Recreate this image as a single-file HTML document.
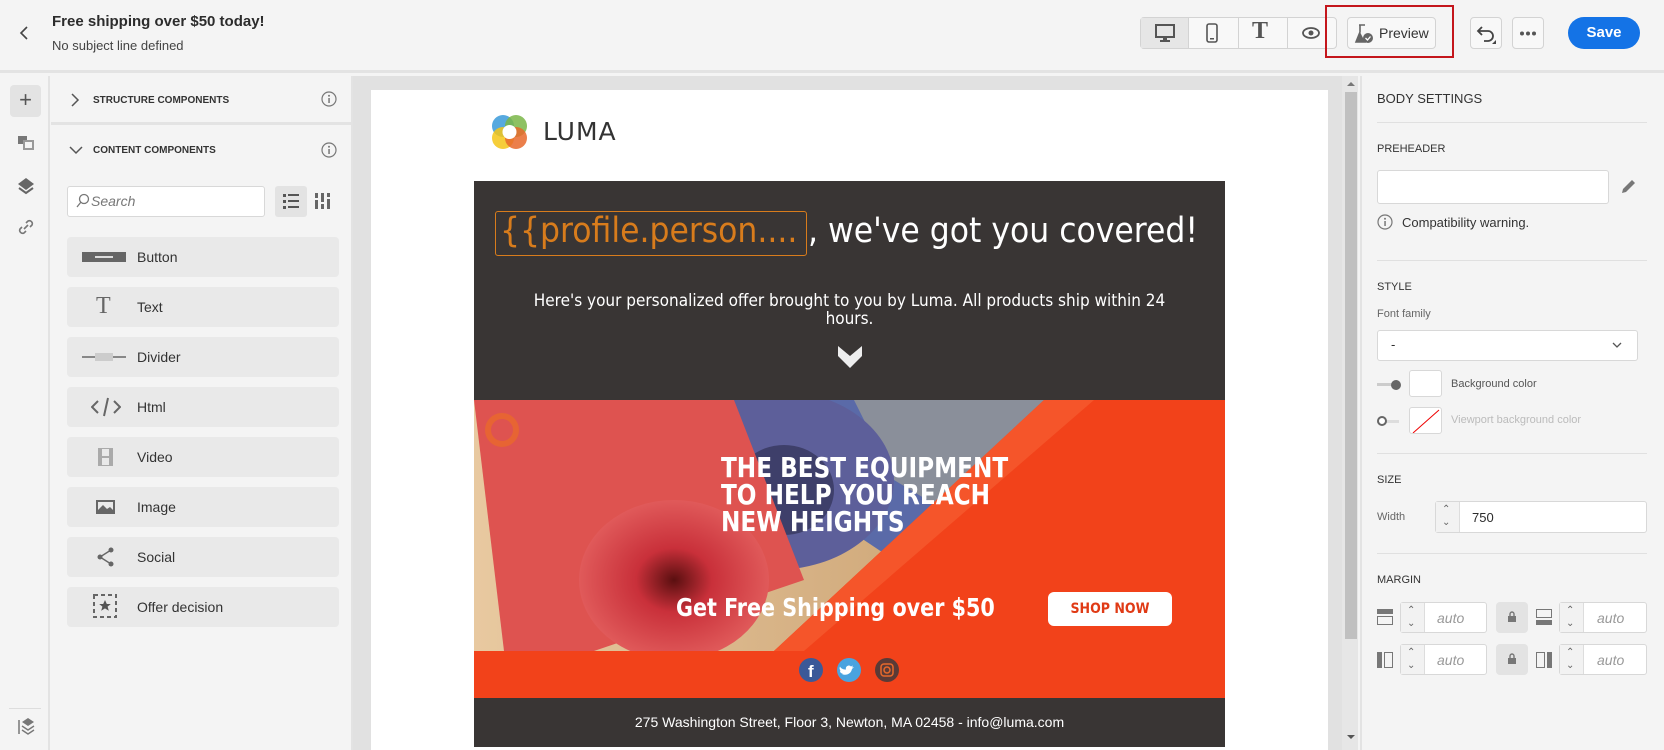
<!DOCTYPE html>
<html><head><meta charset="utf-8"><style>
*{box-sizing:border-box;margin:0;padding:0}
body{width:1664px;height:750px;overflow:hidden;background:#f4f4f4;font-family:"Liberation Sans",sans-serif;color:#2c2c2c;position:relative}
.a{position:absolute}
.hdr{left:0;top:0;width:1664px;height:73px;background:#f4f4f4;border-bottom:3px solid #e3e3e3}
.btn{position:absolute;border:1px solid #d3d3d3;border-radius:4px;background:#f8f8f8}
.item{position:absolute;left:67px;width:272px;height:40px;background:#e9e9e9;border-radius:4px;font-size:14px;color:#333}
.item span{position:absolute;left:70px;top:12px}
.item svg{position:absolute;left:18px;top:8px}
.lbl{position:absolute;font-size:12px;color:#333;text-transform:uppercase}
.inp{position:absolute;background:#fff;border:1px solid #d8d8d8;border-radius:3px}
.hr{position:absolute;left:1377px;width:270px;height:1px;background:#e0e0e0}
.it{font-style:italic;color:#999;font-size:14px;position:absolute}
</style></head><body>
<div class="a hdr"></div>
<svg class="a" style="left:18px;top:25px" width="12" height="16"><path d="M9 2L3 8l6 6" stroke="#444" stroke-width="1.6" fill="none"/></svg>
<div class="a" style="left:52px;top:13px;font-size:15px;font-weight:bold">Free shipping over $50 today!</div>
<div class="a" style="left:52px;top:38px;font-size:13px;color:#444">No subject line defined</div>
<div class="btn" style="left:1140px;top:17px;width:197px;height:32px;background:#f8f8f8"></div>
<div class="a" style="left:1141px;top:18px;width:48px;height:30px;background:#e6e6e6;border-right:1px solid #d3d3d3"></div>
<div class="a" style="left:1238px;top:18px;width:1px;height:30px;background:#d3d3d3"></div>
<div class="a" style="left:1287px;top:18px;width:1px;height:30px;background:#d3d3d3"></div>
<svg class="a" style="left:1155px;top:24px" width="20" height="18"><rect x="1" y="1" width="18" height="12" fill="none" stroke="#555" stroke-width="2"/><rect x="8" y="13" width="4" height="3" fill="#555"/><rect x="5" y="16" width="10" height="2" fill="#555"/></svg>
<svg class="a" style="left:1206px;top:23px" width="12" height="20"><rect x="1" y="1" width="10" height="18" rx="2" fill="none" stroke="#555" stroke-width="1.6"/><rect x="4" y="15" width="4" height="1.5" fill="#555"/></svg>
<div class="a" style="left:1252px;top:18px;font-size:24px;color:#555;font-family:'Liberation Serif',serif;font-weight:bold">T</div>
<svg class="a" style="left:1302px;top:27px" width="18" height="12"><ellipse cx="9" cy="6" rx="8" ry="5" fill="none" stroke="#555" stroke-width="1.8"/><circle cx="9" cy="6" r="2.5" fill="#555"/></svg>
<div class="btn" style="left:1347px;top:17px;width:89px;height:32px"></div>
<svg class="a" style="left:1354px;top:23px" width="20" height="22"><path d="M5 2h6M6 2v7L2 19h10" stroke="#666" stroke-width="1.6" fill="none"/><path d="M6 9L2 19h9z" fill="#666"/><circle cx="14" cy="15" r="5" fill="#666"/><path d="M11.5 15l2 2 3-3.5" stroke="#fff" stroke-width="1.3" fill="none"/></svg>
<div class="a" style="left:1379px;top:25px;font-size:14px;color:#333">Preview</div>
<div class="a" style="left:1325px;top:5px;width:129px;height:53px;border:2px solid #c4161c"></div>
<div class="btn" style="left:1470px;top:17px;width:32px;height:32px"></div>
<svg class="a" style="left:1476px;top:24px" width="22" height="20"><path d="M6 3L2 7l4 4M2 7h10a5 5 0 010 10H8" stroke="#444" stroke-width="1.8" fill="none"/><path d="M20 16v4h-4z" fill="#444"/></svg>
<div class="btn" style="left:1512px;top:17px;width:32px;height:32px"></div>
<svg class="a" style="left:1518px;top:31px" width="20" height="5"><circle cx="4" cy="2.5" r="2" fill="#555"/><circle cx="10" cy="2.5" r="2" fill="#555"/><circle cx="16" cy="2.5" r="2" fill="#555"/></svg>
<div class="a" style="left:1568px;top:17px;width:72px;height:32px;background:#1473e6;border-radius:16px;color:#fff;font-weight:bold;font-size:15px;text-align:center;line-height:32px">Save</div>

<div class="a" style="left:0;top:76px;width:50px;height:674px;background:#f4f4f4;border-right:2px solid #e3e3e3"></div>
<div class="a" style="left:10px;top:85px;width:31px;height:32px;background:#e3e3e3;border-radius:4px;font-size:22px;color:#555;text-align:center;line-height:30px">+</div>
<svg class="a" style="left:17px;top:135px" width="18" height="16"><rect x="1" y="1" width="9" height="8" fill="#777"/><rect x="6" y="5" width="11" height="10" fill="#999"/><rect x="8" y="7" width="7" height="6" fill="#f4f4f4"/></svg>
<svg class="a" style="left:17px;top:177px" width="18" height="18"><path d="M9 1l8 6-8 6-8-6z" fill="#666"/><path d="M2 11l7 5 7-5" stroke="#666" stroke-width="2" fill="none"/></svg>
<svg class="a" style="left:17px;top:218px" width="18" height="18"><path d="M7 11l4-4M5 9l-2 2a3 3 0 004 4l2-2M13 9l2-2a3 3 0 00-4-4L9 5" stroke="#777" stroke-width="1.6" fill="none"/></svg>
<div class="a" style="left:9px;top:708px;width:32px;height:1px;background:#ddd"></div>
<svg class="a" style="left:17px;top:717px" width="18" height="18"><path d="M2 3v14" stroke="#777" stroke-width="1.5"/><path d="M11 1l6 4-6 4-6-4z" fill="#777"/><path d="M5 9l6 4 6-4M5 13l6 4 6-4" stroke="#777" stroke-width="1.4" fill="none"/></svg>

<div class="a" style="left:51px;top:76px;width:302px;height:674px;background:#f4f4f4;border-right:2px solid #e3e3e3"></div>
<div class="a" style="left:51px;top:122px;width:302px;height:3px;background:#e3e3e3"></div>
<svg class="a" style="left:70px;top:93px" width="10" height="14"><path d="M2 1l6 6-6 6" stroke="#555" stroke-width="1.5" fill="none"/></svg>
<div class="lbl" style="left:93px;top:95px;font-size:10px;font-weight:bold;color:#333">Structure components</div>
<svg class="a" style="left:321px;top:91px" width="16" height="16"><circle cx="8" cy="8" r="7" fill="none" stroke="#777" stroke-width="1.2"/><rect x="7.3" y="7" width="1.5" height="5" fill="#777"/><circle cx="8" cy="4.7" r="1" fill="#777"/></svg>
<svg class="a" style="left:69px;top:145px" width="14" height="10"><path d="M1 2l6 6 6-6" stroke="#555" stroke-width="1.5" fill="none"/></svg>
<div class="lbl" style="left:93px;top:145px;font-size:10px;font-weight:bold;color:#333">Content components</div>
<svg class="a" style="left:321px;top:142px" width="16" height="16"><circle cx="8" cy="8" r="7" fill="none" stroke="#777" stroke-width="1.2"/><rect x="7.3" y="7" width="1.5" height="5" fill="#777"/><circle cx="8" cy="4.7" r="1" fill="#777"/></svg>
<div class="inp" style="left:67px;top:186px;width:198px;height:31px"></div>
<svg class="a" style="left:76px;top:193px" width="14" height="16"><circle cx="8" cy="6" r="4.5" fill="none" stroke="#777" stroke-width="1.3"/><path d="M5 9l-4 5" stroke="#777" stroke-width="1.3"/></svg>
<div class="a" style="left:91px;top:193px;font-size:14px;font-style:italic;color:#777">Search</div>
<div class="a" style="left:275px;top:186px;width:32px;height:31px;background:#e3e3e3;border-radius:3px"></div>
<svg class="a" style="left:283px;top:193px" width="16" height="16"><g fill="#555"><rect x="0" y="1" width="3" height="3"/><rect x="5" y="1" width="11" height="2"/><rect x="0" y="7" width="3" height="3"/><rect x="5" y="7" width="11" height="2"/><rect x="0" y="13" width="3" height="3"/><rect x="5" y="13" width="11" height="2"/></g></svg>
<svg class="a" style="left:315px;top:193px" width="16" height="16"><g fill="#666"><rect x="0" y="0" width="3" height="5"/><rect x="6" y="0" width="3" height="9"/><rect x="12" y="0" width="3" height="4"/><rect x="0" y="7" width="3" height="9"/><rect x="6" y="11" width="3" height="5"/><rect x="12" y="6" width="3" height="10"/></g></svg>

<div class="item" style="top:237px"><svg width="44" height="24" style="left:15px"><rect x="0" y="7" width="44" height="10" fill="#666"/><rect x="13" y="11" width="18" height="2" fill="#ddd"/></svg><span>Button</span></div>
<div class="item" style="top:287px"><div class="a" style="left:29px;top:6px;font-family:'Liberation Serif',serif;font-size:24px;color:#666">T</div><span>Text</span></div>
<div class="item" style="top:337px"><svg width="44" height="24" style="left:15px"><rect x="0" y="11" width="44" height="2" fill="#888"/><rect x="13" y="8" width="18" height="8" fill="#ccc"/></svg><span>Divider</span></div>
<div class="item" style="top:387px"><svg width="30" height="24" style="left:24px"><path d="M7 6L1 12l6 6M23 6l6 6-6 6M17 3l-4 18" stroke="#666" stroke-width="2" fill="none"/></svg><span>Html</span></div>
<div class="item" style="top:437px"><svg width="20" height="24" style="left:29px"><rect x="2" y="3" width="15" height="18" fill="#aaa"/><rect x="6" y="4" width="7" height="7" fill="#e9e9e9"/><rect x="6" y="13" width="7" height="7" fill="#e9e9e9"/></svg><span>Video</span></div>
<div class="item" style="top:487px"><svg width="22" height="24" style="left:28px"><rect x="1" y="5" width="19" height="14" fill="#666"/><rect x="3" y="7" width="15" height="8" fill="#e9e9e9"/><path d="M3 15l5-5 4 4 3-2 3 3v1H3z" fill="#666"/></svg><span>Image</span></div>
<div class="item" style="top:537px"><svg width="20" height="24" style="left:29px"><circle cx="15" cy="5" r="2.5" fill="#666"/><circle cx="4" cy="12" r="2.5" fill="#666"/><circle cx="15" cy="19" r="2.5" fill="#666"/><path d="M15 5L4 12l11 7" stroke="#666" stroke-width="1.4" fill="none"/></svg><span>Social</span></div>
<div class="item" style="top:587px"><svg width="26" height="26" style="left:26px;top:7px"><rect x="1" y="1" width="22" height="22" fill="none" stroke="#666" stroke-width="2" stroke-dasharray="4 3"/><path d="M12 6l1.8 4h4l-3.2 2.6 1.2 4.2L12 14.4 8.2 16.8l1.2-4.2L6.2 10h4z" fill="#555"/></svg><span>Offer decision</span></div>

<div class="a" style="left:353px;top:76px;width:989px;height:674px;background:#e1e1e1"></div>
<div class="a" style="left:371px;top:90px;width:957px;height:660px;background:#fff"></div>
<svg class="a" style="left:489px;top:111px" width="42" height="42"><circle cx="14" cy="15" r="11" fill="#3a9ad9" opacity=".85"/><circle cx="27" cy="15" r="11" fill="#7ab648" opacity=".85"/><circle cx="14" cy="27" r="11" fill="#f5c518" opacity=".85"/><circle cx="27" cy="27" r="11" fill="#e8692c" opacity=".85"/><circle cx="20.5" cy="21" r="7" fill="#fff"/></svg>
<div class="a" style="left:543px;top:117px;font-family:'DejaVu Sans',sans-serif;font-size:25px;color:#333;letter-spacing:1px">LUMA</div>
<div class="a" style="left:474px;top:181px;width:751px;height:219px;background:#393534"></div>
<div class="a" style="left:495px;top:211px;width:312px;height:45px;border:1px solid #d87c1c;border-radius:3px"></div>
<div class="a" style="left:500px;top:211px;font-family:'DejaVu Sans Condensed','DejaVu Sans',sans-serif;font-size:35px;color:#d87c1c;white-space:nowrap">{{profile.person....</div>
<div class="a" style="left:808px;top:211px;font-family:'DejaVu Sans Condensed','DejaVu Sans',sans-serif;font-size:35px;color:#fff;white-space:nowrap">, we've got you covered!</div>
<div class="a" style="left:474px;top:292px;width:751px;text-align:center;font-family:'DejaVu Sans Condensed','DejaVu Sans',sans-serif;font-size:17px;line-height:18px;color:#fff">Here's your personalized offer brought to you by Luma. All products ship within 24<br>hours.</div>
<svg class="a" style="left:838px;top:346px" width="24" height="22"><path d="M0 0l12 10L24 0v10L12 22 0 10z" fill="#eee"/></svg>

<div class="a" style="left:474px;top:400px;width:751px;height:251px;overflow:hidden;background:#f2421a">
  <svg width="751" height="251" style="position:absolute;left:0;top:0">
    <defs><linearGradient id="w" x1="0" x2="1"><stop offset="0" stop-color="#e8c9a0"/><stop offset="1" stop-color="#c9a070"/></linearGradient>
    <radialGradient id="r" cx=".5" cy=".5" r=".5"><stop offset="0" stop-color="#5a0f10"/><stop offset=".4" stop-color="#c9303a"/><stop offset="1" stop-color="#e05a5a"/></radialGradient></defs>
    <polygon points="0,0 570,0 300,251 0,251" fill="url(#w)"/>
    <polygon points="180,0 570,0 520,60 420,160" fill="#5a6aa8"/>
    <polygon points="380,0 570,0 470,110 420,80" fill="#8a8f9a"/>
    <ellipse cx="300" cy="80" rx="120" ry="90" fill="#5d5f9a"/>
    <ellipse cx="310" cy="90" rx="50" ry="45" fill="#3e3f6a"/>
    <polygon points="0,0 260,0 330,180 120,251 30,251" fill="#de5350"/>
    <ellipse cx="200" cy="180" rx="95" ry="80" fill="url(#r)"/>
    <polygon points="570,0 751,0 751,251 300,251" fill="#f2421a"/>
    <polygon points="570,0 620,0 330,251 300,251" fill="#f5552a"/>
    <circle cx="28" cy="30" r="14" fill="none" stroke="#e8692c" stroke-width="6" opacity=".8"/>
  </svg>
  <div class="a" style="left:247px;top:54px;font-family:'DejaVu Sans Condensed','DejaVu Sans',sans-serif;font-weight:bold;font-size:28px;line-height:27px;color:#fff;transform:scaleX(.92);transform-origin:left">THE BEST EQUIPMENT<br>TO HELP YOU REACH<br>NEW HEIGHTS</div>
  <div class="a" style="left:202px;top:193px;font-family:'DejaVu Sans Condensed','DejaVu Sans',sans-serif;font-weight:bold;font-size:25px;color:#fff;white-space:nowrap;transform:scaleX(.92);transform-origin:left">Get Free Shipping over $50</div>
  <div class="a" style="left:574px;top:192px;width:124px;height:34px;background:#fff;border-radius:6px;color:#e03a15;font-weight:bold;font-size:14px;text-align:center;line-height:34px;font-family:'DejaVu Sans Condensed',sans-serif">SHOP NOW</div>
</div>
<div class="a" style="left:474px;top:651px;width:751px;height:47px;background:#f2421a"></div>
<svg class="a" style="left:798px;top:657px" width="102" height="26"><circle cx="13" cy="13" r="12" fill="#3b5998"/><text x="10" y="20" font-family="Liberation Sans" font-weight="bold" font-size="17" fill="#fff">f</text><circle cx="51" cy="13" r="12" fill="#4aa3df"/><path d="M44 17c4 2 9 0 10-5l2-2-2 .5 1-2-2 1a3 3 0 00-5 3c-3 0-5-1-6-3-1 2 0 4 1 4h-1c0 2 1 3 3 3z" fill="#fff"/><circle cx="89" cy="13" r="12" fill="#5a3a36"/><rect x="83" y="7" width="12" height="12" rx="3" fill="none" stroke="#e8692c" stroke-width="1.5"/><circle cx="89" cy="13" r="3" fill="none" stroke="#e8692c" stroke-width="1.5"/></svg>
<div class="a" style="left:474px;top:698px;width:751px;height:49px;background:#393534;color:#fff;font-size:14px;text-align:center;line-height:49px">275 Washington Street, Floor 3, Newton, MA 02458 - info@luma.com</div>

<div class="a" style="left:1342px;top:76px;width:16px;height:674px;background:#e6e6e6"></div>
<div class="a" style="left:1345px;top:92px;width:12px;height:547px;background:#c0c0c0"></div>
<svg class="a" style="left:1346px;top:80px" width="10" height="8"><path d="M1 6h8L5 2z" fill="#777"/></svg>
<svg class="a" style="left:1346px;top:733px" width="10" height="8"><path d="M1 2h8L5 6z" fill="#555"/></svg>

<div class="a" style="left:1360px;top:76px;width:304px;height:674px;background:#f4f4f4;border-left:2px solid #e3e3e3"></div>
<div class="lbl" style="left:1377px;top:91px;font-size:13px">Body settings</div>
<div class="hr" style="top:122px"></div>
<div class="lbl" style="left:1377px;top:143px;font-size:11px">Preheader</div>
<div class="inp" style="left:1377px;top:170px;width:232px;height:34px"></div>
<svg class="a" style="left:1619px;top:178px" width="18" height="18"><path d="M3 15l1-4 9-9 3 3-9 9z" fill="#777"/></svg>
<svg class="a" style="left:1377px;top:214px" width="16" height="16"><circle cx="8" cy="8" r="7" fill="none" stroke="#777" stroke-width="1.2"/><rect x="7.3" y="7" width="1.5" height="5" fill="#777"/><circle cx="8" cy="4.7" r="1" fill="#777"/></svg>
<div class="a" style="left:1402px;top:215px;font-size:13px;color:#333">Compatibility warning.</div>
<div class="hr" style="top:260px"></div>
<div class="lbl" style="left:1377px;top:281px;font-size:11px">Style</div>
<div class="a" style="left:1377px;top:308px;font-size:11px;color:#666">Font family</div>
<div class="inp" style="left:1377px;top:330px;width:261px;height:31px"></div>
<div class="a" style="left:1391px;top:337px;font-size:13px">-</div>
<svg class="a" style="left:1611px;top:341px" width="12" height="8"><path d="M2 2l4 4 4-4" stroke="#555" stroke-width="1.3" fill="none"/></svg>
<div class="a" style="left:1377px;top:383px;width:22px;height:3px;background:#ccc"></div>
<div class="a" style="left:1391px;top:380px;width:10px;height:10px;border-radius:50%;background:#666"></div>
<div class="inp" style="left:1409px;top:370px;width:33px;height:27px"></div>
<div class="a" style="left:1451px;top:378px;font-size:11px;color:#555">Background color</div>
<div class="a" style="left:1377px;top:420px;width:22px;height:3px;background:#ddd"></div>
<div class="a" style="left:1377px;top:416px;width:10px;height:10px;border-radius:50%;border:2px solid #666;background:#fff"></div>
<div class="inp" style="left:1409px;top:407px;width:33px;height:27px;overflow:hidden"><svg width="33" height="27"><path d="M3 25L29 2" stroke="#e00" stroke-width="1"/></svg></div>
<div class="a" style="left:1451px;top:414px;font-size:11px;color:#bbb">Viewport background color</div>
<div class="hr" style="top:453px"></div>
<div class="lbl" style="left:1377px;top:474px;font-size:11px">Size</div>
<div class="a" style="left:1377px;top:511px;font-size:11px;color:#666">Width</div>
<div class="inp" style="left:1435px;top:501px;width:212px;height:32px;background:#fff"></div>
<div class="a" style="left:1436px;top:502px;width:24px;height:30px;background:#f2f2f2;border-right:1px solid #ddd"></div>
<div class="a" style="left:1442px;top:503px;font-size:10px;color:#666;line-height:13px">⌃<br>⌄</div>
<div class="a" style="left:1472px;top:510px;font-size:13px">750</div>
<div class="hr" style="top:553px"></div>
<div class="lbl" style="left:1377px;top:574px;font-size:11px">Margin</div>

<svg class="a" style="left:1377px;top:609px" width="17" height="17"><rect x="0" y="0" width="16" height="5" fill="#777"/><rect x=".5" y="7.5" width="15" height="8" fill="none" stroke="#777"/></svg>
<div class="inp" style="left:1400px;top:602px;width:87px;height:31px"></div><div class="a" style="left:1401px;top:603px;width:24px;height:29px;background:#f2f2f2;border-right:1px solid #ddd"></div><div class="a" style="left:1407px;top:604px;font-size:10px;color:#666;line-height:13px">⌃<br>⌄</div><div class="it" style="left:1437px;top:610px">auto</div>
<div class="a" style="left:1496px;top:602px;width:32px;height:31px;background:#e3e3e3;border-radius:4px"></div><svg class="a" style="left:1507px;top:611px" width="10" height="12"><rect x="1" y="5" width="8" height="6" fill="#777"/><path d="M3 5V3a2 2 0 014 0v2" stroke="#777" fill="none" stroke-width="1.4"/></svg>
<svg class="a" style="left:1536px;top:609px" width="17" height="17"><rect x=".5" y=".5" width="15" height="8" fill="none" stroke="#777"/><rect x="0" y="11" width="16" height="5" fill="#777"/></svg>
<div class="inp" style="left:1559px;top:602px;width:88px;height:31px"></div><div class="a" style="left:1560px;top:603px;width:24px;height:29px;background:#f2f2f2;border-right:1px solid #ddd"></div><div class="a" style="left:1566px;top:604px;font-size:10px;color:#666;line-height:13px">⌃<br>⌄</div><div class="it" style="left:1597px;top:610px">auto</div>

<svg class="a" style="left:1377px;top:652px" width="17" height="17"><rect x="0" y="0" width="5" height="16" fill="#777"/><rect x="7.5" y=".5" width="8" height="15" fill="none" stroke="#777"/></svg>
<div class="inp" style="left:1400px;top:644px;width:87px;height:31px"></div><div class="a" style="left:1401px;top:645px;width:24px;height:29px;background:#f2f2f2;border-right:1px solid #ddd"></div><div class="a" style="left:1407px;top:646px;font-size:10px;color:#666;line-height:13px">⌃<br>⌄</div><div class="it" style="left:1437px;top:652px">auto</div>
<div class="a" style="left:1496px;top:644px;width:32px;height:31px;background:#e3e3e3;border-radius:4px"></div><svg class="a" style="left:1507px;top:653px" width="10" height="12"><rect x="1" y="5" width="8" height="6" fill="#777"/><path d="M3 5V3a2 2 0 014 0v2" stroke="#777" fill="none" stroke-width="1.4"/></svg>
<svg class="a" style="left:1536px;top:652px" width="17" height="17"><rect x=".5" y=".5" width="8" height="15" fill="none" stroke="#777"/><rect x="11" y="0" width="5" height="16" fill="#777"/></svg>
<div class="inp" style="left:1559px;top:644px;width:88px;height:31px"></div><div class="a" style="left:1560px;top:645px;width:24px;height:29px;background:#f2f2f2;border-right:1px solid #ddd"></div><div class="a" style="left:1566px;top:646px;font-size:10px;color:#666;line-height:13px">⌃<br>⌄</div><div class="it" style="left:1597px;top:652px">auto</div>
</body></html>
